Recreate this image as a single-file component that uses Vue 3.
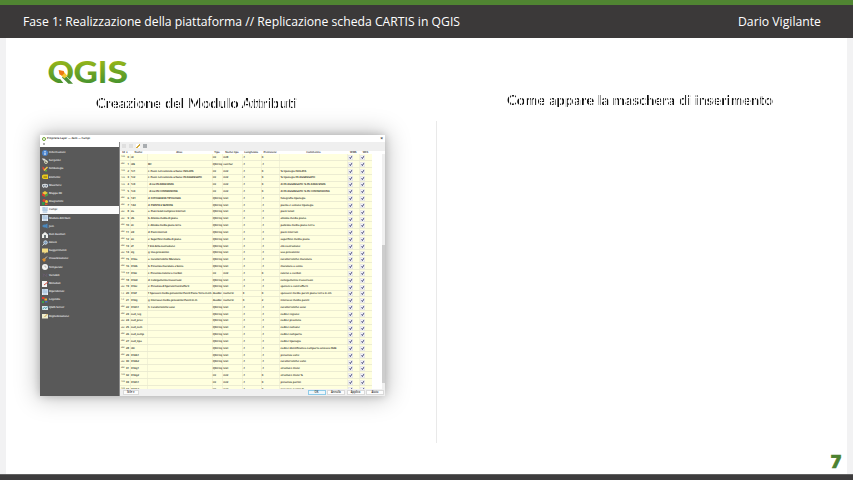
<script setup>
const nav = [
  ['Informazioni', 'info'], ['Sorgente', 'tools'], ['Simbologia', 'brush'], ['Etichette', 'label'],
  ['Maschere', 'mask'], ['Mappa 3D', 'cube'], ['Diagrammi', 'chart'], ['Campi', 'table'],
  ['Modulo Attributi', 'table'], ['Join', 'join'], ['Dati Ausiliari', 'house'], ['Azioni', 'gear'],
  ['Suggerimenti', 'bubble'], ['Visualizzazione', 'paint'], ['Temporale', 'clock'], ['Variabili', 'var'],
  ['Metadati', 'note'], ['Dipendenze', 'table'], ['Legenda', 'legend'], ['QGIS Server', 'server'],
  ['Digitalizzazione', 'edit'],
]
const heads = ['Id  ▾', 'Nome', 'Alias', 'Tipo', 'Nome tipo', 'Lunghezza', 'Precisione', 'Commento', 'WMS', 'WFS']
const S = ['QString', 'text', '-1', '-1']
const I = ['int', 'int2', '-1', '0']
const D = ['double', 'numeric', '3', '0']
const rows = [
  ['id', '', 'int', 'int8', '-1', '0', ''],
  ['idE', 'ID!', 'QString', 'varchar', '-1', '-1', ''],
  ['1c1', 'c. Posiz. nel contesto urbano: ISOLATA', ...I, '% tipologia ISOLATA'],
  ['1c2', 'c. Posiz. nel contesto urbano: IN AGGREGATO', ...I, '% tipologia IN AGGREGATO'],
  ['1c3', '  di cui IN ADIACENZA', ...I, 'di IN AGGREGATO % IN ADIACENZA'],
  ['1c4', '  di cui IN CONNESSIONE', ...I, 'di IN AGGREGATO % IN CONNESSIONE'],
  ['1d1', 'd. FOTOGRAFIA TIPOLOGIA', ...S, 'fotografia tipologia'],
  ['1d2', 'd. PIANTA E SEZIONE', ...S, 'pianta e sezione tipologia'],
  ['2a', 'a. Piani totali compresi interrati', ...S, 'piani totali'],
  ['2b', 'b. Altezza media di piano', ...S, 'altezza media piano'],
  ['2c', 'c. Altezza media piano terra', ...S, 'pallezza media piano terra'],
  ['2d', 'd. Piani interrati', ...S, 'piani interrati'],
  ['2e', 'e. Superficie media di piano', ...S, 'superficie media piano'],
  ['2f', 'f. Età della costruzione', ...S, 'età costruzione'],
  ['2g', 'g. Uso prevalente', ...S, 'uso prevalente'],
  ['31Aa', 'a. Caratteristiche Muratura', ...S, 'caratteristiche muratura'],
  ['31Ab', 'b. Presenza muratura a Secco', ...S, 'muratura a secco'],
  ['31Ac', 'c. Presenza Catene o Cordoli', ...I, 'catene o cordoli'],
  ['31Ad', 'd. Collegamento trasversale', ...S, 'collegamento trasversale'],
  ['31Ae', 'e. Presenza di Speroni/Contrafforti', ...S, 'speroni o contrafforti'],
  ['31Af', 'f. Spessore medio prevalente Pareti Piano Terra in cm', ...D, 'spessore medio pareti piano terra in cm'],
  ['31Ag', 'g. Interasse medio prevalente Pareti in m', 'double', 'numeric', '0', '2', 'interasse medio pareti'],
  ['31Ah1', 'h. Caratteristiche solai', ...S, 'caratteristiche solai'],
  ['cod_reg', '', ...S, 'codice regione'],
  ['cod_prov', '', ...S, 'codice provincia'],
  ['cod_com', '', ...S, 'codice comune'],
  ['cod_comp', '', ...S, 'codice comparto'],
  ['cod_tipo', '', ...S, 'codice tipologia'],
  ['idc', '', ...S, 'codice identificativo comparto univoco ISAE'],
  ['31Ab1', '', ...S, 'presenza volte'],
  ['31Ab2', '', ...S, 'caratteristiche volte'],
  ['31Ag1', '', ...S, 'strutture miste'],
  ['31Ag2', '', ...I, 'strutture miste %'],
  ['31Ah1', '', ...I, 'presenza portici'],
  ['31Ah2', '', ...I, 'presenza portici %'],
]
</script>

<template>
  <div class="slide">
    <header>
      <svg class="title" width="440" height="24" viewBox="0 0 440 24">
        <text x="0" y="15" textLength="437" lengthAdjust="spacingAndGlyphs">Fase 1: Realizzazione della piattaforma // Replicazione scheda CARTIS in QGIS</text>
      </svg>
      <svg width="84" height="24" viewBox="0 0 84 24">
        <text x="0" y="15" textLength="83" lengthAdjust="spacingAndGlyphs">Dario Vigilante</text>
      </svg>
    </header>

    <main>
      <section class="left">
        <svg class="logo" width="82" height="28" viewBox="0 0 82 28">
          <defs>
            <linearGradient id="leaf" gradientUnits="userSpaceOnUse" x1="0" y1="2" x2="0" y2="25">
              <stop offset="0" stop-color="#94b51a" /><stop offset="1" stop-color="#45922f" />
            </linearGradient>
          </defs>
          <g class="brand" fill="url(#leaf)">
            <text x="-0.6" y="24.4" textLength="26.5" lengthAdjust="spacingAndGlyphs">Q</text>
            <text x="25.6" y="24.4" textLength="24.4" lengthAdjust="spacingAndGlyphs">G</text>
            <text x="50" y="24.4">I</text>
            <text x="59.6" y="24.4" textLength="20.6" lengthAdjust="spacingAndGlyphs">S</text>
          </g>
          <path d="M13 11.5 L26.5 25.5 L27 30 H20 L9.5 16.5Z" fill="#fff" />
          <path d="M16.6 15.8 L25 24.8 H20.4 L14 18.5Z" fill="#4f9137" />
          <path d="M11.3 11.5 L16 13 L19.3 16.8 L16.4 19.4 L13 16.2Z" fill="#f5c934" />
          <path d="M10.6 11 L15.8 12 L16.2 14.4 L14 16.5 L11.5 15.6Z" fill="#ee7913" />
        </svg>
        <svg class="caption one" width="204" height="20" viewBox="0 0 204 20">
          <text x="0" y="14" textLength="201" lengthAdjust="spacingAndGlyphs">Creazione del Modulo Attributi</text>
        </svg>

        <div class="window">
          <div class="bar"><i class="q"></i><span>Proprietà Layer — dato — Campi</span><b>×</b></div>
          <div class="content">
            <aside>
              <div class="search"><i></i></div>
              <ul>
                <li v-for="n in nav" :key="n[0]" :class="{ on: n[0] === 'Campi' }">
                  <svg width="6" height="6" viewBox="0 0 12 12">
                    <g v-if="n[1] === 'info'"><circle cx="6" cy="6" r="6" fill="#4c86cf" /><path d="M6 5v5M6 2v2" stroke="#fff" stroke-width="2" /></g>
                    <g v-else-if="n[1] === 'tools'"><path d="M1 1l4 4M4 2l6 6" stroke="#ddd" stroke-width="2.5" /><circle cx="8" cy="8" r="3" fill="none" stroke="#cfd3b5" stroke-width="2" /></g>
                    <g v-else-if="n[1] === 'brush'"><path d="M1 1l4 3v6l-4-4z" fill="#e64b34" /><path d="M4 9l7-7" stroke="#f1ca45" stroke-width="3" /><path d="M6 8h4v3H6z" fill="#5da646" /></g>
                    <g v-else-if="n[1] === 'label'"><path d="M0 3l3-2h9v9H3L0 8z" fill="#eacb1d" /><path d="M3 6h7" stroke="#7d6714" stroke-width="2" /></g>
                    <g v-else-if="n[1] === 'mask'"><path d="M0 3q6-3 12 0v5l-4 2-2-2-3 2-3-3z" fill="#d5dadd" /><circle cx="3.5" cy="5.5" r="1.5" fill="#567" /><circle cx="8.5" cy="5.5" r="1.5" fill="#567" /></g>
                    <g v-else-if="n[1] === 'cube'"><path d="M0 4l6-4 6 4-6 4z" fill="#e9c83b" /><path d="M0 4l6 4v4L0 9z" fill="#df3b2c" /><path d="M12 4L6 8v4l6-3z" fill="#4ca048" /></g>
                    <g v-else-if="n[1] === 'chart'"><circle cx="4" cy="3" r="3" fill="#df4133" /><circle cx="9" cy="5" r="3" fill="#efcb35" /><path d="M0 6h5v6H0z" fill="#31994a" /><path d="M6 9h5v3H6z" fill="#e7572b" /></g>
                    <g v-else-if="n[1] === 'table'"><path d="M0 0h12v12H0z" fill="#eaf1f8" /><path d="M0 2h12M4 0v12M0 6h12M8 3v9" stroke="#6b9bc5" /></g>
                    <path v-else-if="n[1] === 'join'" d="M0 6l5-4v2l6-3v10L5 8v2z" fill="#4a88bd" />
                    <g v-else-if="n[1] === 'house'"><path d="M0 5l6-5 6 5v7H0z" fill="#ecefed" /><path d="M4 6h4v6H4z" fill="#6b7476" /></g>
                    <g v-else-if="n[1] === 'gear'"><circle cx="7" cy="5" r="3.5" fill="#7a9dbd" stroke="#cbd7e2" stroke-width="2" /><path d="M1 11l4-4" stroke="#cbd7e2" stroke-width="2" /></g>
                    <path v-else-if="n[1] === 'bubble'" d="M0 1h12v8H8l-3 3V9H0z" fill="#f2dc83" />
                    <g v-else-if="n[1] === 'paint'"><path d="M3 8l7-7" stroke="#d8c9ad" stroke-width="2" /><path d="M0 7l4-3 4 4-4 4z" fill="#d98b2b" /></g>
                    <g v-else-if="n[1] === 'clock'"><circle cx="6" cy="6" r="6" fill="#f3f3f1" /><path d="M6 3v3h3" stroke="#777" fill="none" /></g>
                    <path v-else-if="n[1] === 'var'" d="M2 3q3 3 0 7M10 3q-3 3 0 7M4 4l4 4" stroke="#735f7d" fill="none" />
                    <g v-else-if="n[1] === 'note'"><path d="M0 0h10v12H0z" fill="#f3f3f3" /><path d="M4 8l8-6" stroke="#d45141" stroke-width="2" /></g>
                    <g v-else-if="n[1] === 'legend'"><path d="M0 0h5v4H0z" fill="#e23d2e" /><path d="M5 3h5v4H5z" fill="#efb532" /><path d="M0 8h4v4H0z" fill="#37a24a" /><path d="M6 8h5v3H6z" fill="#446fbb" /></g>
                    <g v-else-if="n[1] === 'server'"><path d="M0 2h12v8H0z" fill="#d9e7ea" /><path d="M1 8l4-3 3 2 3-4" stroke="#4798a8" fill="none" stroke-width="2" /></g>
                    <g v-else><path d="M0 2h12v9H0z" fill="#eeeecf" /><path d="M5 8l6-6" stroke="#c79c42" stroke-width="2" /></g>
                  </svg>
                  <span>{{ n[0] }}</span>
                </li>
              </ul>
            </aside>
            <div class="fields">
              <div class="tools"><i></i><i></i><i class="pen"></i><i class="calc"></i></div>
              <div class="row head"><span v-for="h in heads" :key="h">{{ h }}</span></div>
              <div class="scroll">
                <div class="rows">
                  <div v-for="(r, i) in rows" :key="i" class="row">
                    <span class="num"><em>{{ r[2] === 'double' ? '1.2' : r[2] === 'int' ? '123' : 'abc' }}</em>{{ i }}</span>
                    <span v-for="(c, j) in r" :key="j" :class="{ alias: j === 1 }">{{ c }}</span>
                    <span v-for="k in 2" :key="'c' + k" class="check">
                      <svg width="5" height="5" viewBox="0 0 10 10"><path d="M.5 .5h9v9h-9z" fill="#f4f4fa" stroke="#d5d5dd" /><path d="M3 5l1.8 2L7.5 2.5" fill="none" stroke="#2e3166" stroke-width="1.9" /></svg>
                    </span>
                  </div>
                </div>
                <div class="track"><div class="thumb"></div></div>
              </div>
              <div class="buttons">
                <button class="style">Stile ▾</button>
                <button class="ok">OK</button><button>Annulla</button><button>Applica</button><button>Aiuto</button>
              </div>
            </div>
          </div>
        </div>
      </section>
      <div class="divider"></div>
      <section class="right">
        <svg class="caption two" width="270" height="20" viewBox="0 0 270 20">
          <text x="0" y="14" textLength="266" lengthAdjust="spacingAndGlyphs">Come appare la maschera di inserimento</text>
        </svg>
        <div class="page">7</div>
      </section>
    </main>
    <footer></footer>
  </div>
</template>

<style>
body { margin: 0; overflow: hidden; }
</style>

<style scoped>
* { box-sizing: border-box; }
.slide { width: 853px; height: 480px; display: flex; flex-direction: column; background: #fff; font-family: Lato, "Noto Sans", sans-serif; overflow: hidden; }
header { height: 38px; border-top: 5px solid #508532; background: #3b3939; display: flex; justify-content: space-between; align-items: flex-start; padding: 6px 31px 0 22.5px; }
header svg, .logo { overflow: visible; }
header text { font: 13.5px "Open Sans", sans-serif; fill: #fff; }
main { height: 436px; display: flex; border: solid #f2f2f3; border-width: 0 6px; }
footer { height: 6px; background: #3d3c3d; border-top: 1px solid #626262; }
.left { width: 430px; padding: 21px 0 0 34px; display: flex; flex-direction: column; align-items: flex-start; }
.logo { display: block; margin-left: 8px; }
.brand { font: 900 30.5px Lato, sans-serif; }
.caption { display: block; -webkit-mask-image: repeating-linear-gradient(90deg, #000 0 2px, rgba(0,0,0,.05) 2px 3px, rgba(0,0,0,.9) 3px 4px, rgba(0,0,0,.12) 4px 5px); mask-image: repeating-linear-gradient(90deg, #000 0 2px, rgba(0,0,0,.05) 2px 3px, rgba(0,0,0,.9) 3px 4px, rgba(0,0,0,.12) 4px 5px); }
.caption text { font: 700 13px Lato, sans-serif; fill: #111; }
.one { margin: 7px 0 0 56px; }
.two { margin-top: 1px; }
.divider { width: 1px; height: 322px; margin-top: 83px; background: #e9e9e9; }
.right { flex: 1; display: flex; flex-direction: column; justify-content: space-between; padding: 52px 6px 2px 70px; }
.page { align-self: flex-end; color: #4c8230; font: 900 17px/20px Inter, sans-serif; -webkit-text-stroke: .7px #4c8230; }
.window { width: 345px; height: 261px; margin-top: 21px; background: #f3f3f3; box-shadow: 0 0 8px rgba(0,0,0,.2), 0 0 22px 2px rgba(0,0,0,.25); font: 500 2.7px/1.3 "Noto Sans", sans-serif; color: #000; text-rendering: geometricPrecision; display: flex; flex-direction: column; }
.bar { height: 7.3px; flex: none; background: #fff; display: flex; align-items: center; gap: 1px; padding: .6px 2px 0; }
.bar span { font-size: 2.75px; white-space: nowrap; }
.bar b { margin-left: auto; font-size: 5px; color: #222; }
.q { width: 4px; height: 4px; border: 1px solid #6da331; border-radius: 50%; }
.content { flex: 1; display: flex; min-height: 0; }
aside { width: 80px; background: #595959; border-right: 1px solid #8a8a8a; }
.search { height: 5px; background: #fff; padding: 1px 3px; }
.search i { display: block; width: 2px; height: 2px; border: .5px solid #777; border-radius: 50%; }
ul { list-style: none; padding: 1.5px 0 0; margin: 0; }
li { height: 8.18px; display: flex; align-items: center; gap: 1.5px; padding-left: 1.5px; color: #fff; }
li svg { display: block; }
li.on { background: #fafafa; color: #111; }
.fields { flex: 1; display: flex; flex-direction: column; min-width: 0; }
.tools { height: 8.4px; flex: none; display: flex; align-items: center; gap: 3px; padding-left: 2px; background: #efefef; }
.tools i { width: 4px; height: 4px; background: #dfdfdf; }
.tools .pen { background: linear-gradient(135deg, #fff 40%, #d3a93b 40% 65%, #fff 65%); }
.tools .calc { background: #a9adb0; }
.row { display: grid; grid-template-columns: 10px 17px 64.7px 10.6px 19.4px 19px 18.8px 67.8px 12.2px 12.2px; height: 6.82px; width: 251.7px; background: linear-gradient(#ffffdf 0 84%, #ececd2 84%); }
.row span { white-space: pre; padding-left: 1px; display: flex; align-items: center; box-shadow: inset .6px 0 #e9e9d0; }
.row.head { height: 3.6px; flex: none; background: #fff; width: 100%; }
.row.head span { justify-content: center; padding: 0; box-shadow: none; }
.row .num { justify-content: space-between; padding-right: 1px; box-shadow: none; }
.num em { font-style: normal; font-size: 2.2px; color: #444; }
.row .alias { letter-spacing: -.09px; }
.row .check { padding-left: 1px; }
.scroll { flex: 1; min-height: 0; overflow: hidden; display: flex; justify-content: space-between; background: #fff; }
.track { width: 3px; background: #f0f0f0; padding-top: 91px; }
.thumb { height: 138px; background: #cdcdcd; }
.buttons { height: 7.2px; flex: none; display: flex; align-items: center; gap: 1.5px; padding: 0 1px 0 3px; background: #f0f0f0; }
button { width: 18px; height: 5px; padding: 0; border: .5px solid #dadada; background: #fdfdfd; font: inherit; color: #222; }
.style { margin-right: auto; width: 16px; }
.ok { border-color: #8fcbe8; background: #edf7fc; }
</style>
